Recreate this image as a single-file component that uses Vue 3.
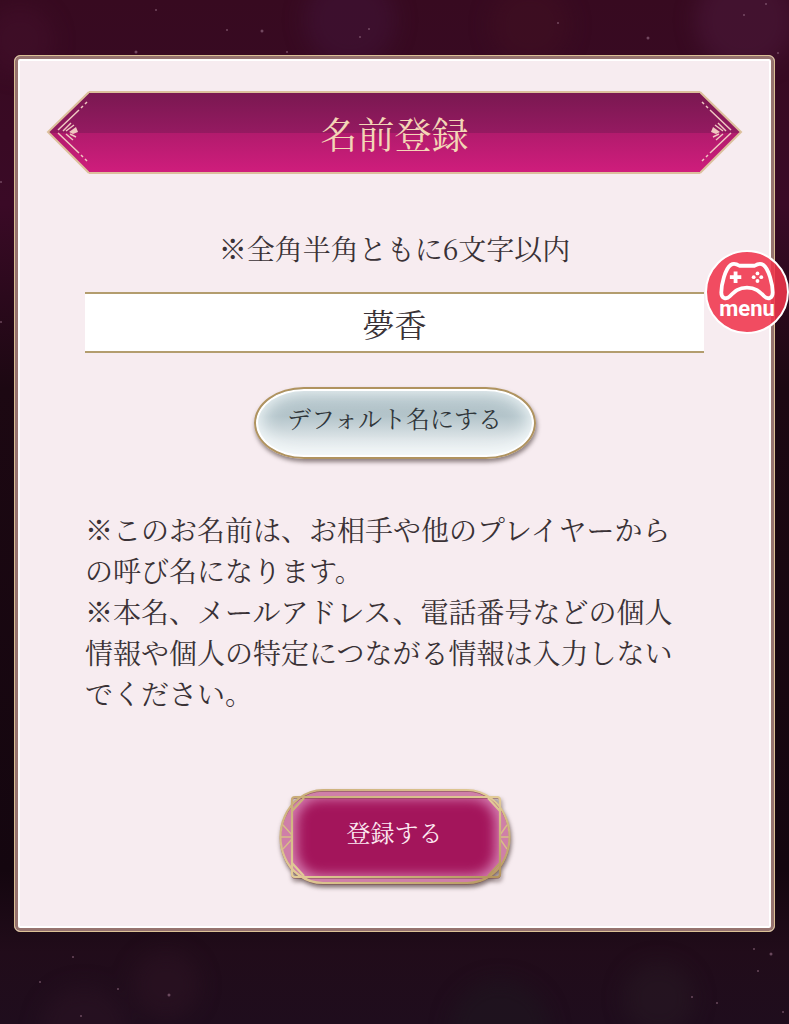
<!-- src/views/NameRegister.vue -->
<template>
  <div class="page">
    <svg class="stars" viewBox="0 0 789 1024" preserveAspectRatio="xMidYMid slice" aria-hidden="true">
      <defs>
        <filter id="haze" x="-10%" y="-10%" width="120%" height="120%" color-interpolation-filters="sRGB">
          <feGaussianBlur stdDeviation="10" />
        </filter>
      </defs>
      <g filter="url(#haze)">
        <circle v-for="(g, i) in glows" :key="'g' + i" :cx="g[0]" :cy="g[1]" :r="g[2]" :fill="g[3]" fill-opacity="0.5" />
      </g>
      <circle v-for="(s, i) in stars" :key="i" :cx="s[0]" :cy="s[1]" :r="s[2]" fill="#9a7288" fill-opacity="0.6" />
    </svg>

    <main class="card">
      <header class="banner">
        <svg v-for="side in ['left', 'right']" :key="side" class="banner-end" :class="side" viewBox="0 0 43 83" aria-hidden="true">
          <defs>
            <linearGradient :id="side + 'Fill'" x1="0" y1="0" x2="0" y2="1">
              <stop offset="0" stop-color="#7a1851" />
              <stop offset="0.51" stop-color="#951a61" />
              <stop offset="0.51" stop-color="#b21b6d" />
              <stop offset="1" stop-color="#cf1d7c" />
            </linearGradient>
          </defs>
          <path d="M43 1 L2 41 L43 82 Z" :fill="`url(#${side}Fill)`" />
          <path d="M43 1 L2 41 L43 82" fill="none" stroke="#dcc09c" stroke-width="2" />
          <g fill="none" stroke="#f0c8c0" stroke-width="1.5">
            <path d="M33 19 L12 39 M12 42 L33 62" />
            <path d="M35 17 L37 15 M39 13 L41 11 M35 64 L37 66 M39 68 L41 70" />
            <path d="M17 40 L25 32 M20 40 L28 34 M20 43 L27 49 M24 43 L30 46" />
            <path d="M23 41 L30 36 L32 41 L27 43 Z" fill="#f0c8c0" stroke="none" />
          </g>
        </svg>
        <h1 class="banner-title">名前登録</h1>
      </header>

      <form class="form" @submit.prevent>
        <label class="hint" for="player-name">※全角半角ともに6文字以内</label>
        <input id="player-name" v-model="name" class="name-input" type="text" maxlength="6" />
        <button class="default-btn" type="button" @click="name = defaultName">デフォルト名にする</button>

        <div class="notes">
          <p>※このお名前は、お相手や他のプレイヤーからの呼び名になります。</p>
          <p>※本名、メールアドレス、電話番号などの個人情報や個人の特定につながる情報は入力しないでください。</p>
        </div>

        <button class="submit-btn" type="submit">
          <svg class="submit-frame" viewBox="0 0 232 96" aria-hidden="true">
            <defs>
              <linearGradient id="gold" x1="0" y1="0" x2="1" y2="1">
                <stop offset="0" stop-color="#c9ac78" />
                <stop offset="0.5" stop-color="#e3cc98" />
                <stop offset="1" stop-color="#b3945c" />
              </linearGradient>
              <filter id="soft" x="-20%" y="-40%" width="140%" height="180%" color-interpolation-filters="sRGB">
                <feGaussianBlur stdDeviation="6" />
              </filter>
              <clipPath id="plate">
                <path d="M25 8 H209 L221 22 V74 L209 88 H25 L13 74 V22 Z" />
              </clipPath>
            </defs>
            <path d="M44 1 H188 C207 1 221 15 226 27 C232 40 232 56 226 69 C221 81 207 94 188 94 H44 C25 94 11 81 6 69 C0 56 0 40 6 27 C11 15 25 1 44 1 Z" fill="#cf7fa8" />
            <g clip-path="url(#plate)">
              <rect x="12" y="7" width="210" height="82" fill="#d47bb0" />
              <rect x="18" y="10" width="198" height="76" rx="24" fill="#a3155b" filter="url(#soft)" />
            </g>
            <g fill="none" stroke="#7d4a4c" stroke-opacity="0.7" stroke-width="1.4" transform="translate(0 1)">
              <rect x="13" y="8" width="208" height="80" rx="3" />
              <path d="M44 1 H188 C207 1 221 15 226 27 C232 40 232 56 226 69 C221 81 207 94 188 94 H44 C25 94 11 81 6 69 C0 56 0 40 6 27 C11 15 25 1 44 1 Z" />
            </g>
            <g fill="none" stroke="#d9bd88" stroke-width="1.4">
              <path d="M2 48 H13 M4 36 L13 46 M4 60 L13 50 M230 48 H221 M228 36 L221 46 M228 60 L221 50" />
            </g>
            <g fill="none" stroke="url(#gold)" stroke-width="2.2">
              <path d="M44 1 H188 C207 1 221 15 226 27 C232 40 232 56 226 69 C221 81 207 94 188 94 H44 C25 94 11 81 6 69 C0 56 0 40 6 27 C11 15 25 1 44 1 Z" />
              <rect x="13" y="8" width="208" height="80" rx="3" />
              <path d="M25 9 L13 22 M209 9 L221 22 M25 87 L13 74 M209 87 L221 74" />
            </g>
          </svg>
          <span class="submit-text">登録する</span>
        </button>
      </form>
    </main>

    <button class="menu-btn" type="button">
      <svg class="pad" viewBox="0 0 60 42" aria-hidden="true">
        <path d="M13 4 C16 2 19 3 22 5 H38 C41 3 44 2 47 4 C53 8 57 25 57 33 C57 39 52 41 48 37 C43 32 39 28 30 28 C21 28 17 32 12 37 C8 41 3 39 3 33 C3 25 7 8 13 4 Z" fill="none" stroke="#fff" stroke-width="4" stroke-linejoin="round" />
        <path d="M18 11 V23 M12 17 H24" stroke="#fff" stroke-width="4" />
        <g fill="#fff">
          <circle cx="41" cy="13" r="2" />
          <circle cx="41" cy="21" r="2" />
          <circle cx="37" cy="17" r="2" />
          <circle cx="45" cy="17" r="2" />
        </g>
      </svg>
      <span class="menu-text">menu</span>
    </button>
  </div>
</template>

<script setup>
import { ref } from 'vue';

const defaultName = '夢香';
const name = ref(defaultName);

// x, y, radius
const stars = [
  [156, 10, 1], [227, 30, 1], [262, 31, 1.5], [136, 52, 1.5], [104, 71, 1],
  [360, 37, 1], [369, 29, 1], [336, 77, 1], [558, 23, 1], [648, 38, 1.5],
  [667, 57, 1], [766, 4, 1], [778, 53, 1], [744, 15, 1], [287, 52, 1],
  [1, 182, 1], [1, 322, 1], [73, 957, 1], [118, 989, 1], [169, 995, 1.5],
  [81, 1016, 1], [40, 982, 1], [754, 949, 1], [771, 954, 1.5], [758, 971, 1],
  [692, 997, 1], [717, 1003, 1], [783, 1012, 1],
];

// x, y, radius, colour
const glows = [
  [350, 20, 46, '#42143a'], [530, 25, 40, '#421022'], [745, 20, 50, '#4e1a3e'],
  [20, 40, 34, '#440f2c'], [166, 985, 34, '#2d1424'], [659, 998, 36, '#281a24'],
  [84, 1030, 44, '#2c1424'], [500, 1030, 50, '#1d1820'],
];
</script>

<style>
body {
  margin: 0;
  background: #1f0c1b;
}
</style>

<style scoped>
.page {
  position: relative;
  box-sizing: border-box;
  min-height: 100vh;
  padding: 55px 14px 92px;
  overflow: hidden;
  background: linear-gradient(180deg, #370a20 0%, #3a0a26 20%, #1c0812 38%, #14060f 85%, #210c1a 93%, #1f0d1d 100%);
  font-family: "Noto Serif CJK JP", "Noto Sans CJK JP", serif;
  color: #3a3236;
}

.stars {
  position: absolute;
  inset: 0;
  width: 100%;
  height: 100%;
}

.card {
  position: relative;
  padding: 35px 31px 46px;
  border: 1px solid #dcc196;
  border-radius: 6px;
  background: #f7ecf0;
  box-shadow: inset 0 0 0 3px #96736f, inset 0 0 0 5px #fff;
}

.banner {
  display: flex;
  height: 83px;
}

.banner-end {
  flex: none;
  width: 43px;
  height: 83px;
}

.right {
  order: 3;
  transform: scaleX(-1);
}

.banner-title {
  box-sizing: border-box;
  flex: 1;
  margin: 0;
  border-top: 2px solid #dcc09c;
  border-bottom: 2px solid #dcc09c;
  background: linear-gradient(180deg, #7a1851 0%, #951a61 51%, #b21b6d 51%, #cf1d7c 100%);
  color: #f3d6b6;
  font-size: 37px;
  font-weight: 400;
  line-height: 80px;
  text-align: center;
}

.form {
  display: flex;
  flex-direction: column;
  align-items: center;
  padding: 54px 39px 0;
}

.hint {
  font-size: 28px;
  line-height: 40px;
}

.name-input {
  box-sizing: border-box;
  width: 100%;
  height: 61px;
  margin-top: 24px;
  padding: 0;
  border: 0;
  border-top: 2px solid #b39d6e;
  border-bottom: 2px solid #b39d6e;
  border-radius: 0;
  background: #fff;
  color: inherit;
  font: inherit;
  font-size: 32px;
  text-align: center;
}

.default-btn {
  width: 282px;
  height: 72px;
  margin-top: 34px;
  padding: 0 0 10px;
  border: 2px solid #b0935f;
  border-radius: 50px / 36px;
  background: linear-gradient(180deg, #b0c1c7 0%, #b3c4ca 40%, #dfe6e9 75%, #f3f6f7 100%);
  box-shadow: inset 0 0 0 2px #fff, inset 0 0 18px 4px #f4fafb, 1px 3px 4px rgba(70, 55, 55, 0.6);
  color: #30363a;
  font: inherit;
  font-size: 24px;
  line-height: 1;
}

.notes {
  align-self: stretch;
  margin-top: 50px;
  padding-right: 16px;
  font-size: 28px;
  line-height: 41px;
}

.notes p {
  margin: 0;
}

.submit-btn {
  position: relative;
  width: 232px;
  height: 96px;
  margin-top: 75px;
  padding: 0 0 10px;
  border: 0;
  background: none;
  color: #fdeaf2;
  font: inherit;
  font-size: 24px;
  line-height: 1;
}

.submit-frame {
  position: absolute;
  inset: 0;
  width: 232px;
  height: 96px;
  overflow: visible;
  filter: drop-shadow(1px 3px 2px rgba(80, 60, 60, 0.7));
}

.submit-text {
  position: relative;
}

.menu-btn {
  position: absolute;
  top: 250px;
  right: 0;
  display: flex;
  flex-direction: column;
  align-items: center;
  box-sizing: border-box;
  width: 84px;
  height: 84px;
  padding: 9px 0 0;
  border: 2px solid #fff;
  border-radius: 50%;
  background: rgba(240, 54, 76, 0.88);
  color: #fff;
}

.pad {
  flex: none;
  width: 58px;
  height: 40px;
}

.menu-text {
  font-family: Roboto, "Noto Sans", sans-serif;
  font-size: 22px;
  font-weight: 700;
  line-height: 16px;
}
</style>
